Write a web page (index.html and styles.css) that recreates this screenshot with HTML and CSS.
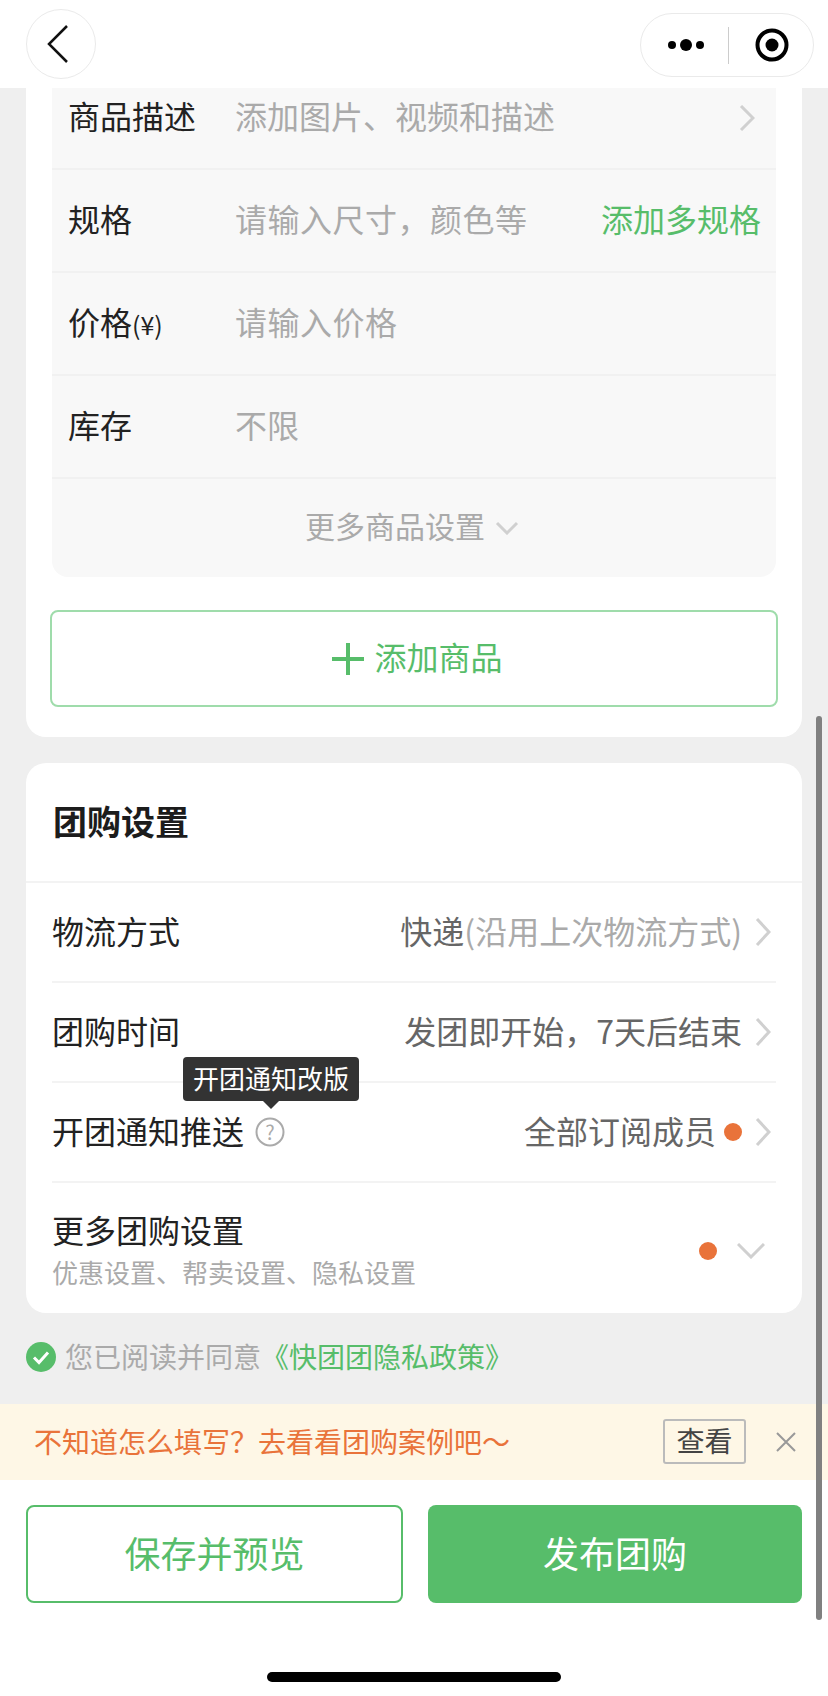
FILE: index.html
```html
<!DOCTYPE html>
<html lang="zh-CN">
<head>
    <meta charset="UTF-8">
    <meta name="viewport" content="width=device-width, initial-scale=1.0">
    <title>发布团购</title>
    <link rel="stylesheet" href="styles.css">
</head>
<body>
    <div class="page">
        <header class="nav">
            <div class="nav-back">
                <svg width="24" height="40" viewBox="0 0 24 40"><path d="M21 2 L3 20 L21 38" class="line-dark"/></svg>
            </div>
            <div class="capsule">
                <svg class="capsule-dots" width="38" height="16" viewBox="0 0 38 16"><circle cx="5" cy="8" r="4"/><circle cx="19" cy="8" r="6"/><circle cx="33" cy="8" r="4"/></svg>
                <span class="capsule-divider"></span>
                <svg width="34" height="34" viewBox="0 0 34 34"><circle cx="17" cy="17" r="14.5" fill="none" stroke="#000" stroke-width="4"/><circle cx="17" cy="17" r="6.5"/></svg>
            </div>
        </header>

        <main class="content">
            <section class="card card-goods">
                <div class="goods-form">
                    <div class="form-row form-row-first">
                        <span class="form-label">商品描述</span>
                        <span class="form-hint">添加图片、视频和描述</span>
                        <svg class="chevron" width="16" height="26" viewBox="0 0 16 26"><path d="M2 1 L14 13 L2 25" class="line-light"/></svg>
                    </div>
                    <div class="form-row">
                        <span class="form-label">规格</span>
                        <span class="form-hint form-hint-wide">请输入尺寸，颜色等</span>
                        <span class="form-link">添加多规格</span>
                    </div>
                    <div class="form-row">
                        <span class="form-label">价格<small>(¥)</small></span>
                        <span class="form-hint form-hint-wide">请输入价格</span>
                    </div>
                    <div class="form-row">
                        <span class="form-label">库存</span>
                        <span class="form-hint">不限</span>
                    </div>
                    <div class="form-more">
                        <span>更多商品设置</span>
                        <svg width="24" height="14" viewBox="0 0 24 14"><path d="M2 2 L12 12 L22 2" class="line-light"/></svg>
                    </div>
                </div>
                <div class="add-goods">
                    <svg width="32" height="32" viewBox="0 0 32 32"><path d="M16 0 V32 M0 16 H32" fill="none" stroke="#57bd6a" stroke-width="4"/></svg>
                    <span>添加商品</span>
                </div>
            </section>

            <section class="card card-settings">
                <h2 class="card-title">团购设置</h2>
                <div class="set-row">
                    <span class="set-label">物流方式</span>
                    <span class="set-value">快递<em>(沿用上次物流方式)</em></span>
                    <svg class="chevron" width="16" height="28" viewBox="0 0 16 28"><path d="M2 1 L14 14 L2 27" class="line-light"/></svg>
                </div>
                <div class="set-row">
                    <span class="set-label">团购时间</span>
                    <span class="set-value">发团即开始，7天后结束</span>
                    <svg class="chevron" width="16" height="28" viewBox="0 0 16 28"><path d="M2 1 L14 14 L2 27" class="line-light"/></svg>
                </div>
                <div class="set-row">
                    <span class="set-label">开团通知推送</span>
                    <span class="help">
                        <svg width="30" height="30" viewBox="0 0 30 30"><circle cx="15" cy="15" r="13.5" fill="none" stroke="#aaa" stroke-width="2"/></svg>
                        <i class="help-mark">?</i>
                        <span class="tooltip">开团通知改版</span>
                    </span>
                    <span class="set-value">全部订阅成员</span>
                    <span class="dot"></span>
                    <svg class="chevron" width="16" height="28" viewBox="0 0 16 28"><path d="M2 1 L14 14 L2 27" class="line-light"/></svg>
                </div>
                <div class="set-row set-row-more">
                    <div class="set-more-text">
                        <span class="set-label">更多团购设置</span>
                        <span class="set-sub">优惠设置、帮卖设置、隐私设置</span>
                    </div>
                    <span class="dot"></span>
                    <svg class="chevron-down" width="28" height="16" viewBox="0 0 28 16"><path d="M1 1 L14 14 L27 1" class="line-light"/></svg>
                </div>
            </section>

            <div class="agree">
                <svg width="30" height="30" viewBox="0 0 30 30"><circle cx="15" cy="15" r="15" fill="#57bd6a"/><path d="M8 15.5 L13 20.5 L22 10.5" fill="none" stroke="#fff" stroke-width="3"/></svg>
                <span class="agree-text">您已阅读并同意</span>
                <span class="agree-link">《快团团隐私政策》</span>
            </div>
        </main>

        <div class="tip-bar">
            <span class="tip-text">不知道怎么填写？去看看团购案例吧～</span>
            <span class="tip-btn">查看</span>
            <svg width="20" height="20" viewBox="0 0 20 20"><path d="M1 1 L19 19 M19 1 L1 19" fill="none" stroke="#999" stroke-width="2"/></svg>
        </div>

        <footer class="actions">
            <div class="action-btns">
                <div class="btn btn-outline">保存并预览</div>
                <div class="btn btn-solid">发布团购</div>
            </div>
            <div class="home-bar"></div>
        </footer>

        <div class="scrollbar"></div>
    </div>
</body>
</html>
```

FILE: styles.css
```css
* {
    box-sizing: border-box;
}
body {
    margin: 0;
    font-family: "Noto Sans CJK SC", "Liberation Sans", sans-serif;
    background: #efefef;
    color: #222;
}
svg {
    display: block;
    flex-shrink: 0;
}
.line-dark {
    fill: none;
    stroke: #111;
    stroke-width: 2.5;
}
.line-light {
    fill: none;
    stroke: #d0d0d0;
    stroke-width: 3;
}
.page {
    position: relative;
    width: 828px;
    height: 1696px;
    overflow: hidden;
    display: flex;
    flex-direction: column;
}

/* top bar */
.nav {
    height: 88px;
    flex-shrink: 0;
    background: #fff;
    display: flex;
    align-items: center;
    justify-content: space-between;
    padding: 0 14px 0 26px;
}
.nav-back {
    width: 70px;
    height: 70px;
    border: 1px solid #eaeaea;
    border-radius: 50%;
    display: flex;
    align-items: center;
    justify-content: center;
    padding-right: 6px;
}
.capsule {
    width: 174px;
    height: 64px;
    margin-top: 2px;
    border: 1px solid #eaeaea;
    border-radius: 32px;
    display: flex;
    align-items: center;
    padding-left: 26px;
}
.capsule-divider {
    width: 1px;
    height: 37px;
    background: #ccc;
    margin: 0 26px 0 23px;
}

/* cards */
.content {
    flex: 1;
    padding: 0 26px;
}
.card {
    background: #fff;
    border-radius: 20px;
}
.card-goods {
    border-radius: 0 0 20px 20px;
    padding: 0 26px 30px;
}
.goods-form {
    background: #f8f8f8;
    border-radius: 0 0 16px 16px;
}
.form-row {
    height: 102px;
    padding: 0 15px 0 16px;
    display: flex;
    align-items: center;
    border-bottom: 2px solid #f1f1f1;
    font-size: 32px;
}
.form-row-first {
    height: 82px;
    padding-bottom: 20px;
}
.form-row + .form-row {
    height: 103px;
}
.form-row .chevron {
    margin-right: 6px;
}
.form-label {
    width: 167px;
    flex-shrink: 0;
    color: #222;
    padding-bottom: 6px;
}
.form-label small {
    font-size: 25px;
}
.form-hint {
    flex: 1;
    color: #aaa;
    padding-bottom: 6px;
}
.form-hint-wide {
    letter-spacing: 0.5px;
}
.form-link {
    color: #57bd6a;
    padding-bottom: 6px;
}
.form-more {
    height: 98px;
    display: flex;
    align-items: center;
    justify-content: center;
    gap: 10px;
    font-size: 30px;
    color: #aaa;
    padding-right: 4px;
}
.form-more span {
    padding-bottom: 6px;
}
.add-goods {
    height: 97px;
    margin: 33px -2px 0;
    border: 2px solid #9fdcab;
    border-radius: 8px;
    display: flex;
    align-items: center;
    justify-content: center;
    gap: 10px;
    font-size: 32px;
    color: #57bd6a;
    padding-left: 7px;
}
.add-goods span {
    padding-bottom: 6px;
}
.card-settings {
    margin-top: 26px;
    padding-bottom: 0;
}
.card-title {
    height: 120px;
    margin: 0;
    padding: 0 0 4px 27px;
    display: flex;
    align-items: center;
    font-size: 34px;
    font-weight: 700;
    color: #1c1c1c;
    border-bottom: 2px solid #f3f3f3;
}
.set-row {
    position: relative;
    height: 100px;
    margin: 0 26px;
    display: flex;
    align-items: center;
    border-bottom: 2px solid #f3f3f3;
    font-size: 32px;
}
.set-label {
    color: #222;
    padding-bottom: 5px;
}
.set-value {
    margin-left: auto;
    color: #666;
    padding-bottom: 5px;
}
.set-value em {
    font-style: normal;
    color: #aaa;
}
.set-row .chevron {
    margin: 0 5px 0 13px;
}
.help {
    position: relative;
    margin-left: 11px;
    width: 30px;
    height: 30px;
}
.help-mark {
    position: absolute;
    inset: 0;
    font-style: normal;
    font-size: 20px;
    line-height: 30px;
    text-align: center;
    color: #aaa;
}
.tooltip {
    position: absolute;
    left: -72px;
    bottom: 46px;
    width: 176px;
    height: 44px;
    border-radius: 4px;
    background: #333;
    color: #fff;
    font-size: 26px;
    line-height: 42px;
    text-align: center;
}
.tooltip::after {
    content: "";
    position: absolute;
    left: 80px;
    top: 44px;
    border-left: 8px solid transparent;
    border-right: 8px solid transparent;
    border-top: 8px solid #333;
}
.dot {
    width: 18px;
    height: 18px;
    margin-left: 8px;
    border-radius: 50%;
    background: #e9733a;
}
.set-row-more {
    height: 130px;
    border-bottom: 0;
}
.set-more-text {
    display: flex;
    flex-direction: column;
    margin-right: auto;
    margin-top: 4px;
}
.set-more-text .set-label {
    line-height: 42px;
    padding-bottom: 0;
}
.set-sub {
    font-size: 26px;
    line-height: 40px;
    margin-top: 2px;
    color: #aaa;
}
.set-row-more .dot {
    margin-top: 6px;
}
.chevron-down {
    margin: 6px 11px 0 20px;
}
.agree {
    height: 91px;
    display: flex;
    align-items: center;
    gap: 9px;
    font-size: 28px;
    padding-bottom: 4px;
}
.agree-text {
    color: #aaa;
    padding-bottom: 2px;
}
.agree-link {
    color: #57bd6a;
    margin-left: -9px;
    padding-bottom: 2px;
}

/* tip bar */
.tip-bar {
    height: 76px;
    flex-shrink: 0;
    background: #fef7e6;
    display: flex;
    align-items: center;
    padding-left: 34px;
    font-size: 28px;
}
.tip-text {
    color: #e9733a;
    margin-right: auto;
    padding-bottom: 2px;
}
.tip-btn {
    width: 83px;
    height: 45px;
    margin: -2px 30px 0 0;
    border: 2px solid #bbb;
    border-radius: 3px;
    color: #444;
    line-height: 39px;
    text-align: center;
}
.tip-bar svg {
    margin-right: 32px;
}

/* bottom actions */
.actions {
    height: 217px;
    flex-shrink: 0;
    background: #fff;
    padding: 25px 26px 0;
}
.action-btns {
    display: flex;
    gap: 25px;
}
.btn {
    height: 98px;
    flex: 1;
    border-radius: 8px;
    display: flex;
    align-items: center;
    justify-content: center;
    font-size: 36px;
    padding-bottom: 4px;
}
.btn-outline {
    flex: none;
    width: 377px;
    border: 2px solid #57bd6a;
    color: #57bd6a;
}
.btn-solid {
    background: #57bd6a;
    color: #fff;
}
.home-bar {
    width: 294px;
    height: 10px;
    margin: 69px auto 0;
    border-radius: 5px;
    background: #000;
}
.scrollbar {
    position: absolute;
    right: 6px;
    top: 716px;
    width: 6px;
    height: 904px;
    border-radius: 3px;
    background: #808080;
}
```
